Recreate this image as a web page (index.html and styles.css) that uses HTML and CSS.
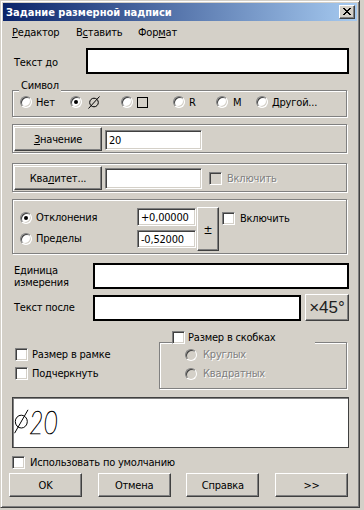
FILE: index.html
```html
<!DOCTYPE html>
<html lang="ru">
<head>
<meta charset="utf-8">
<title>Задание размерной надписи</title>
<link rel="stylesheet" href="styles.css">
</head>
<body>
<div class="window">
  <div class="titlebar">
    <span class="title">Задание размерной надписи</span>
    <span class="close-btn"><svg width="8" height="7" viewBox="0 0 8 7"><path d="M0 0h2v1h-2zM6 0h2v1h-2zM1 1h2v1h-2zM5 1h2v1h-2zM2 2h4v1h-4zM3 3h2v1h-2zM2 4h4v1h-4zM1 5h2v1h-2zM5 5h2v1h-2zM0 6h2v1h-2zM6 6h2v1h-2z" fill="#000"/></svg></span>
  </div>
  <div class="menubar">
    <span class="mi"><u>Р</u>едактор</span>
    <span class="mi">В<u>с</u>тавить</span>
    <span class="mi">Фор<u>м</u>ат</span>
  </div>
  <div class="content">
    <div class="row row-before">
      <span class="lbl lbl-before">Текст до</span>
      <span class="edit-b edit-before"></span>
    </div>

    <div class="group g-symbol">
      <span class="legend legend-symbol">Символ</span>
      <span class="opt opt-g4"><span class="radio"></span><span>Нет</span></span>
      <span class="opt opt-g5"><span class="radio checked"></span><svg class="sym" width="12" height="14" viewBox="0 0 12 14"><title>⌀</title><circle cx="6" cy="7.5" r="4.3" fill="none" stroke="#000" stroke-width="1"/><path d="M0.5 13.5 L11.5 1.5" stroke="#000" stroke-width="1" fill="none"/></svg></span>
      <span class="opt opt-g4"><span class="radio"></span><span class="square"></span></span>
      <span class="opt opt-g4"><span class="radio"></span><span>R</span></span>
      <span class="opt opt-g5"><span class="radio"></span><span>M</span></span>
      <span class="opt opt-g4"><span class="radio"></span><span>Другой...</span></span>
    </div>

    <div class="group g-value">
      <span class="btn btn-group"><u>З</u>начение</span>
      <span class="edit edit-value">20</span>
    </div>

    <div class="group g-qual">
      <span class="btn btn-group">Ква<u>л</u>итет...</span>
      <span class="edit edit-qual"></span>
      <span class="opt opt-g5 disabled qual-check"><span class="check"></span><span class="dis-text">Включить</span></span>
    </div>

    <div class="group g-dev">
      <div class="dev-radios">
        <span class="opt opt-g4 dev-row"><span class="radio checked"></span><span>Отклонения</span></span>
        <span class="opt opt-g4 dev-row"><span class="radio"></span><span>Пределы</span></span>
      </div>
      <div class="dev-inputs">
        <span class="edit edit-dev">+0,00000</span>
        <span class="edit edit-dev">-0,52000</span>
      </div>
      <span class="btn btn-pm">±</span>
      <span class="opt opt-g5 dev-check"><span class="check"></span><span>Включить</span></span>
    </div>

    <div class="row row-unit">
      <span class="lbl lbl-unit">Единица<br>измерения</span>
      <span class="edit-b edit-unit"></span>
    </div>

    <div class="row row-after">
      <span class="lbl lbl-after">Текст после</span>
      <span class="edit-b edit-after"></span>
      <span class="btn btn-45">×45°</span>
    </div>

    <div class="bottom">
      <div class="left-checks">
        <span class="opt opt-g4"><span class="check"></span><span>Размер в рамке</span></span>
        <span class="opt opt-g4"><span class="check"></span><span>Подчеркнуть</span></span>
      </div>
      <div class="group g-brackets">
        <span class="legend legend-brackets"><span class="opt opt-g3"><span class="check"></span><span>Размер в скобках</span></span></span>
        <span class="opt opt-g6 disabled"><span class="radio"></span><span class="dis-text">Круглых</span></span>
        <span class="opt opt-g6 disabled"><span class="radio"></span><span class="dis-text">Квадратных</span></span>
      </div>
    </div>

    <div class="preview">
      <svg class="diam" width="15" height="25" viewBox="0 0 15 25"><title>⌀</title><ellipse cx="7.3" cy="12.6" rx="6" ry="6.4" fill="none" stroke="#000" stroke-width="1"/><path d="M0.6 24.2 L14 0.8" stroke="#000" stroke-width="1" fill="none"/></svg>
      <span class="preview-text">20</span>
    </div>

    <div class="default-row">
      <span class="opt opt-g5"><span class="check"></span><span>Использовать по умолчанию</span></span>
    </div>
  </div>
  <div class="buttons">
    <span class="btn btn-main">OK</span>
    <span class="btn btn-main">Отмена</span>
    <span class="btn btn-main">Справка</span>
    <span class="btn btn-main">&gt;&gt;</span>
  </div>
</div>
</body>
</html>
```
FILE: styles.css
```css
* { box-sizing: border-box; }
html, body { margin: 0; padding: 0; }
body {
  background: #d4d0c8;
  width: 364px;
  height: 510px;
  overflow: hidden;
  font-family: "DejaVu Sans Condensed", "DejaVu Sans", sans-serif;
  font-size: 11px;
  line-height: 13px;
  letter-spacing: -0.2px;
  color: #000;
}
u { text-decoration: underline; text-underline-offset: 1px; }

.window {
  width: 360px;
  height: 508px;
  border: 1px solid;
  border-color: #d4d0c8 #404040 #404040 #d4d0c8;
  box-shadow: inset 1px 1px #fff, inset -1px -1px #808080;
  padding: 2px;
  background: #d4d0c8;
  display: flex;
  flex-direction: column;
}

.titlebar {
  height: 18px;
  flex: 0 0 18px;
  background: linear-gradient(to right, #0a246a, #a6caf0);
  display: flex;
  align-items: center;
  justify-content: space-between;
  padding: 0 2px 0 3px;
  color: #fff;
  font-weight: bold;
  letter-spacing: 0;
}
.close-btn {
  width: 16px;
  height: 14px;
  background: #d4d0c8;
  border: 1px solid;
  border-color: #fff #404040 #404040 #fff;
  box-shadow: inset -1px -1px #808080;
  display: flex;
  align-items: center;
  justify-content: center;
  padding: 0 1px 1px 0;
}
.close-btn svg { display: block; }

.menubar {
  height: 22px;
  flex: 0 0 22px;
  display: grid;
  grid-template-columns: 64px 62px auto;
  padding: 5px 0 0 9px;
}

.content {
  padding: 5px 8px 0 9px;
  display: flex;
  flex-direction: column;
}

.row { display: flex; }
.lbl { padding-left: 2px; }

.edit-b {
  display: block;
  height: 26px;
  border: 2px solid #000;
  background: #fff;
}
.edit {
  display: flex;
  align-items: center;
  background: #fff;
  border: 1px solid;
  border-color: #808080 #fff #fff #808080;
  box-shadow: inset 1px 1px #404040, inset -1px -1px #d4d0c8;
  padding-left: 3px;
}

.row-before { height: 26px; align-items: center; }
.lbl-before { width: 74px; padding-top: 2px; }
.edit-before { width: 263px; }

.group {
  position: relative;
  width: 335px;
  border: 1px solid #808080;
  box-shadow: inset 1px 1px #fff, 1px 1px #fff;
}
.legend {
  position: absolute;
  background: #d4d0c8;
  height: 13px;
}
.legend-symbol { top: -12px; left: 6px; padding: 0 2px; }

.opt { display: flex; align-items: center; }
.opt-g3 { gap: 3px; }
.opt-g4 { gap: 4px; }
.opt-g5 { gap: 5px; }
.opt-g6 { gap: 6px; }

.radio {
  position: relative;
  flex: 0 0 12px;
  width: 12px;
  height: 12px;
  border-radius: 50%;
  background: #fff;
  border: 1px solid;
  border-color: #808080 #fff #fff #808080;
  box-shadow: inset 1px 1px #404040, inset -1px -1px #d4d0c8;
}
.radio.checked::after {
  content: "";
  position: absolute;
  left: 3px;
  top: 3px;
  width: 4px;
  height: 4px;
  border-radius: 50%;
  background: #000;
}
.disabled .radio, .disabled .check { background: #d4d0c8; }
.dis-text { color: #808080; text-shadow: 1px 1px #fff; }

.check {
  flex: 0 0 13px;
  width: 13px;
  height: 13px;
  background: #fff;
  border: 1px solid;
  border-color: #808080 #fff #fff #808080;
  box-shadow: inset 1px 1px #404040, inset -1px -1px #d4d0c8;
}

.btn {
  display: flex;
  align-items: center;
  justify-content: center;
  background: #d4d0c8;
  border: 1px solid;
  border-color: #fff #404040 #404040 #fff;
  box-shadow: inset -1px -1px #808080;
}

.sym { display: block; margin-left: 1px; }
.square {
  width: 11px;
  height: 11px;
  border: 1px solid #000;
}

.g-symbol {
  margin-top: 16px;
  height: 27px;
  display: grid;
  grid-template-columns: 50px 51px 52px 43px 40px auto;
  align-items: center;
  padding: 0 0 3px 7px;
}

.g-value {
  margin-top: 7px;
  height: 29px;
  display: flex;
  align-items: flex-start;
  padding: 2px 0 0 1px;
}
.btn-group { width: 88px; height: 24px; }
.edit-value { width: 97px; height: 20px; margin: 3px 0 0 3px; }

.g-qual {
  margin-top: 10px;
  height: 29px;
  display: flex;
  align-items: flex-start;
  padding: 2px 0 0 1px;
}
.edit-qual { width: 97px; height: 21px; margin: 2px 0 0 3px; }
.qual-check { margin: 6px 0 0 7px; }

.g-dev {
  margin-top: 7px;
  height: 55px;
  display: flex;
  align-items: flex-start;
  padding-top: 7px;
}
.dev-radios { width: 124px; padding-left: 7px; }
.dev-row { height: 21px; }
.dev-inputs { width: 59px; margin-top: 1px; display: flex; flex-direction: column; gap: 4px; }
.edit-dev { height: 18px; }
.btn-pm { width: 22px; height: 44px; margin-left: 1px; padding-top: 2px; font-size: 12px; }
.dev-check { margin: 5px 0 0 3px; }

.row-unit { margin-top: 9px; height: 26px; align-items: center; }
.lbl-unit { width: 81px; line-height: 12px; padding-top: 1px; }
.edit-unit { width: 256px; }

.row-after { margin-top: 5px; height: 27px; align-items: flex-start; }
.lbl-after { width: 81px; align-self: center; }
.edit-after { width: 208px; margin-top: 1px; }
.btn-45 {
  width: 44px;
  height: 27px;
  margin-left: 4px;
  font-family: "Liberation Sans", sans-serif;
  font-size: 17px;
  letter-spacing: 0;
  color: #202020;
}

.bottom { margin-top: 10px; display: flex; }
.left-checks {
  width: 147px;
  padding: 17px 0 0 3px;
  display: flex;
  flex-direction: column;
  gap: 6px;
}
.g-brackets {
  width: 188px;
  height: 47px;
  margin-top: 11px;
  padding: 5px 0 0 25px;
  display: flex;
  flex-direction: column;
  gap: 6px;
}
.legend-brackets { top: -12px; left: 12px; width: 143px; padding-left: 0; }

.preview {
  margin-top: 8px;
  width: 337px;
  height: 51px;
  background: #fff;
  border: 1px solid #404040;
  box-shadow: inset 1px 1px #808080;
  overflow: hidden;
  display: flex;
  align-items: flex-start;
  padding: 0 0 0 1px;
}
.diam { display: block; flex: 0 0 15px; margin-top: 11px; }
.preview-text {
  display: inline-block;
  margin-top: 7px;
  font-family: "Lato", "Roboto", sans-serif;
  font-weight: 100;
  font-style: italic;
  font-size: 31px;
  line-height: 34px;
  letter-spacing: 0;
  color: #000;
  -webkit-text-stroke: 0.6px #000;
  transform: scaleX(0.8);
  transform-origin: left center;
}

.default-row { margin-top: 8px; height: 13px; display: flex; }

.buttons {
  margin-top: 4px;
  padding: 0 9px 0 6px;
  display: flex;
  justify-content: space-between;
}
.btn-main { width: 73px; height: 24px; }
```
